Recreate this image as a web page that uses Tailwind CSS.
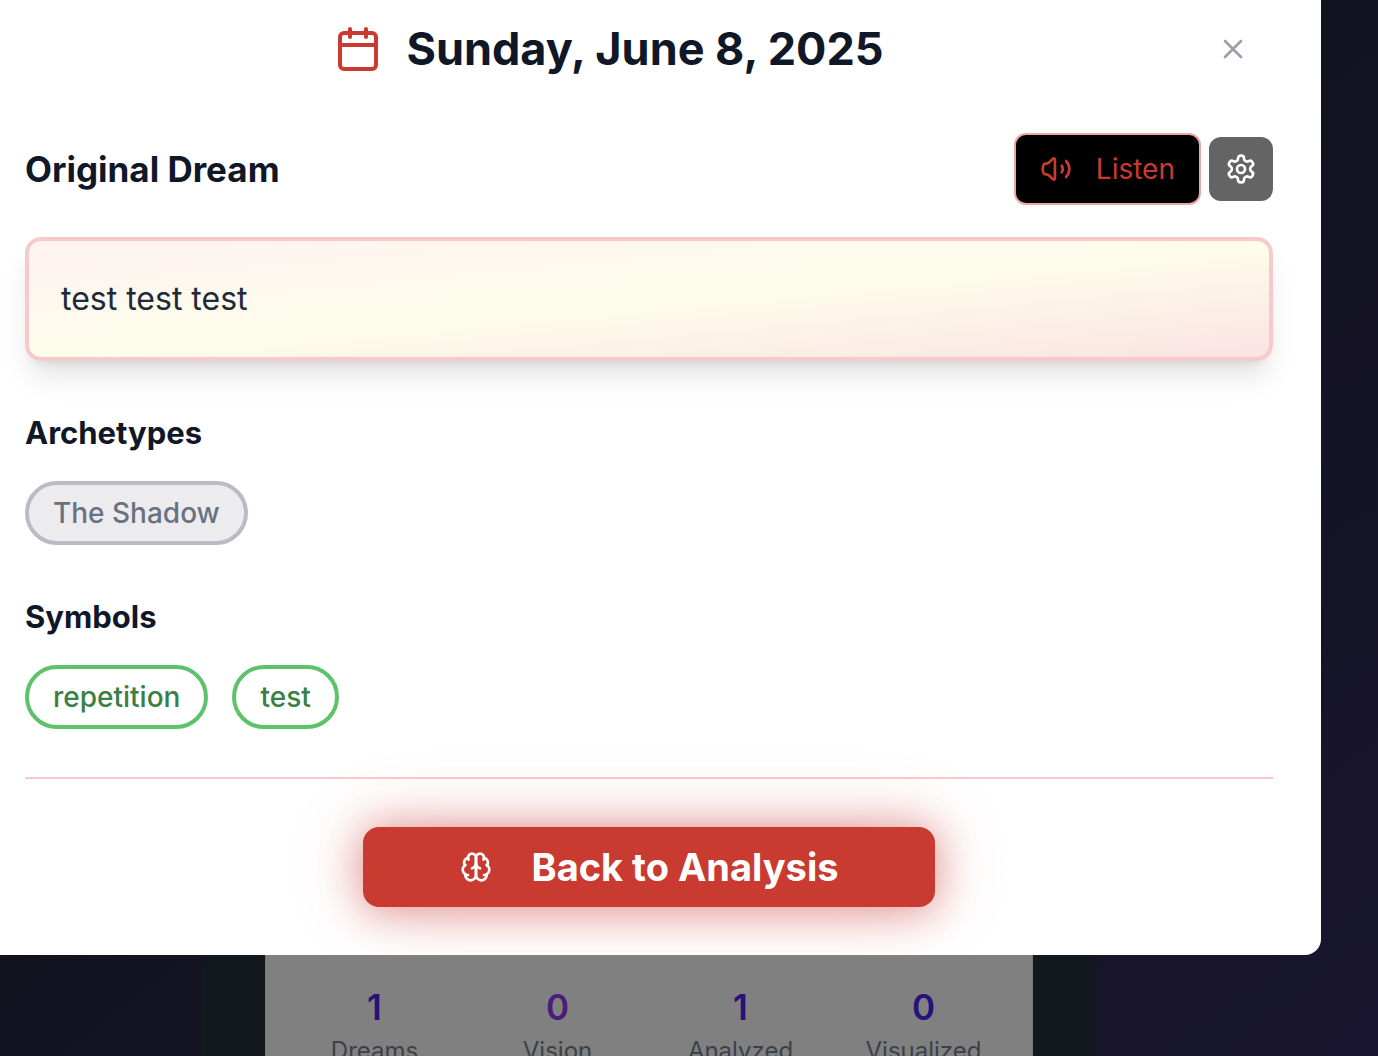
<!DOCTYPE html>
<html lang="en">
<head>
<meta charset="utf-8">
<meta name="viewport" content="width=device-width, initial-scale=1">
<title>Dream details</title>
<script src="https://cdn.jsdelivr.net/npm/@tailwindcss/browser@4"></script>
</head>
<body class="h-screen overflow-hidden bg-linear-to-br from-[#11111a] from-30% to-[#191530] font-['Inter',sans-serif] text-gray-900">

<div role="dialog" aria-labelledby="dream-title" class="mr-[57px] overflow-hidden rounded-br-2xl bg-white pt-[9px] pr-12 pb-12 pl-[25px]">
  <header class="flex h-20 items-center">
    <div class="flex flex-1 items-center justify-center gap-6">
      <svg class="size-12 text-[#c93a31]" viewBox="0 0 24 24" fill="none" stroke="currentColor" stroke-width="2" stroke-linecap="round" stroke-linejoin="round" aria-hidden="true"><path d="M8 2v4M16 2v4"/><rect width="18" height="18" x="3" y="4" rx="2"/><path d="M3 10h18"/></svg>
      <h1 id="dream-title" class="text-[45px] leading-14 font-bold whitespace-nowrap">Sunday, June 8, 2025</h1>
    </div>
    <button type="button" aria-label="Close" class="flex size-20 items-center justify-center text-gray-400">
      <svg class="size-8" viewBox="0 0 24 24" fill="none" stroke="currentColor" stroke-width="2" stroke-linecap="round" stroke-linejoin="round" aria-hidden="true"><path d="M18 6 6 18M6 6l12 12"/></svg>
    </button>
  </header>

  <section class="mt-11">
    <div class="flex items-center justify-between">
      <h2 class="text-[35px] leading-12 font-bold">Original Dream</h2>
      <div class="flex items-center gap-2">
        <button type="button" class="flex h-18 items-center gap-6 rounded-xl border-2 border-[#f0a5a5] bg-black px-6 text-[28px] text-[#c93a31]">
          <svg class="size-8" viewBox="0 0 24 24" fill="none" stroke="currentColor" stroke-width="2" stroke-linecap="round" stroke-linejoin="round" aria-hidden="true"><path d="M11.200 5c0-.9-1-1.200-1.600-.6L7.200 6.800C6.400 7.600 5.800 8 4.800 8H4a2 2 0 0 0-1.500 1.200 9 9 0 0 0 0 5.600A2 2 0 0 0 4 16h.8c1 0 1.600.4 2.400 1.200l2.400 2.400c.6.6 1.600.3 1.600-.6z"/><path d="M16.300 9.500a4.500 4.500 0 0 1 0 5"/><path d="M19.500 6a8.500 8.500 0 0 1 0 12"/></svg>
          Listen
        </button>
        <button type="button" aria-label="Voice settings" class="flex size-16 items-center justify-center rounded-xl bg-[#646464] text-white">
          <svg class="size-8" viewBox="0 0 24 24" fill="none" stroke="currentColor" stroke-width="2" stroke-linecap="round" stroke-linejoin="round" aria-hidden="true"><path d="M12.220 2h-.44a2 2 0 0 0-2 2v.18a2 2 0 0 1-1 1.730l-.43.25a2 2 0 0 1-2 0l-.15-.08a2 2 0 0 0-2.730.73l-.22.38a2 2 0 0 0 .73 2.730l.15.1a2 2 0 0 1 1 1.720v.51a2 2 0 0 1-1 1.740l-.15.09a2 2 0 0 0-.73 2.730l.22.38a2 2 0 0 0 2.730.73l.15-.08a2 2 0 0 1 2 0l.43.25a2 2 0 0 1 1 1.730V20a2 2 0 0 0 2 2h.44a2 2 0 0 0 2-2v-.18a2 2 0 0 1 1-1.730l.43-.25a2 2 0 0 1 2 0l.15.08a2 2 0 0 0 2.730-.73l.22-.39a2 2 0 0 0-.73-2.730l-.15-.08a2 2 0 0 1-1-1.740v-.5a2 2 0 0 1 1-1.740l.15-.09a2 2 0 0 0 .73-2.730l-.22-.38a2 2 0 0 0-2.730-.73l-.15.08a2 2 0 0 1-2 0l-.43-.25a2 2 0 0 1-1-1.730V4a2 2 0 0 0-2-2z"/><circle cx="12" cy="12" r="3"/></svg>
        </button>
      </div>
    </div>
    <div class="mt-8 rounded-2xl border-4 border-[#f6caca] bg-[linear-gradient(to_bottom_right,#fdf2f2,#fefdea_50%,#fae3e3)] p-8 shadow-[0_20px_30px_-6px_rgba(0,0,0,0.12),0_8px_12px_-8px_rgba(0,0,0,0.1)]">
      <p class="text-[32px] leading-[52px] text-gray-800">test test test</p>
    </div>
  </section>

  <section class="mt-12">
    <h3 class="text-[31px] leading-12 font-bold">Archetypes</h3>
    <div class="mt-6 flex flex-wrap gap-6">
      <span class="flex h-16 items-center rounded-full border-4 border-[#b9bcc5] bg-[#ececee] px-6 text-[28px] font-medium text-gray-500">The Shadow</span>
    </div>
  </section>

  <section class="mt-12">
    <h3 class="text-[31px] leading-12 font-bold">Symbols</h3>
    <div class="mt-6 flex flex-wrap gap-6">
      <span class="flex h-16 items-center rounded-full border-4 border-[#5dc269] px-6 text-[28px] font-medium text-[#3a8043]">repetition</span>
      <span class="flex h-16 items-center rounded-full border-4 border-[#5dc269] px-6 text-[28px] font-medium text-[#3a8043]">test</span>
    </div>
  </section>

  <footer class="mt-12 flex justify-center border-t-2 border-[#f6caca] pt-12">
    <button type="button" class="flex h-20 w-[572px] items-center justify-center gap-10 rounded-2xl bg-[#c93a31] text-[38px] font-bold text-white shadow-[0_0_40px_rgba(201,58,49,0.38),0_0_80px_rgba(201,58,49,0.2),0_8px_40px_rgba(201,58,49,0.15)]">
      <svg class="size-8" viewBox="0 0 24 24" fill="none" stroke="currentColor" stroke-width="2" stroke-linecap="round" stroke-linejoin="round" aria-hidden="true"><path d="M12 5a3 3 0 1 0-5.997.125 4 4 0 0 0-2.526 5.770 4 4 0 0 0 .556 6.588A4 4 0 1 0 12 18Z"/><path d="M12 5a3 3 0 1 1 5.997.125 4 4 0 0 1 2.526 5.770 4 4 0 0 1-.556 6.588A4 4 0 1 1 12 18Z"/><path d="M15 13a4.500 4.500 0 0 1-3-4 4.500 4.500 0 0 1-3 4"/><path d="M17.599 6.500a3 3 0 0 0 .399-1.375"/><path d="M6.003 5.125A3 3 0 0 0 6.401 6.500"/><path d="M3.477 10.896a4 4 0 0 1 .585-.396"/><path d="M19.938 10.500a4 4 0 0 1 .585.396"/><path d="M6 18a4 4 0 0 1-1.967-.516"/><path d="M19.967 17.484A4 4 0 0 1 18 18"/></svg>
      Back to Analysis
    </button>
  </footer>
</div>

<div class="-mt-4 mr-20 flex justify-center">
  <main class="relative -z-10 w-[896px] bg-[#13181f] px-16">
    <dl class="grid grid-cols-4 border-x border-[#74777a] bg-[#808080] px-[17px] pt-11 pb-12 text-center">
      <div class="flex flex-col-reverse"><dt class="text-[24px] leading-8 text-[#3c4048]">Dreams</dt><dd class="mb-1 text-[35px] leading-12 font-semibold text-[#26127a]">1</dd></div>
      <div class="flex flex-col-reverse"><dt class="text-[24px] leading-8 text-[#3c4048]">Vision</dt><dd class="mb-1 text-[35px] leading-12 font-semibold text-[#491d78]">0</dd></div>
      <div class="flex flex-col-reverse"><dt class="text-[24px] leading-8 text-[#3c4048]">Analyzed</dt><dd class="mb-1 text-[35px] leading-12 font-semibold text-[#26127a]">1</dd></div>
      <div class="flex flex-col-reverse"><dt class="text-[24px] leading-8 text-[#3c4048]">Visualized</dt><dd class="mb-1 text-[35px] leading-12 font-semibold text-[#26127a]">0</dd></div>
    </dl>
  </main>
</div>
</body>
</html>
